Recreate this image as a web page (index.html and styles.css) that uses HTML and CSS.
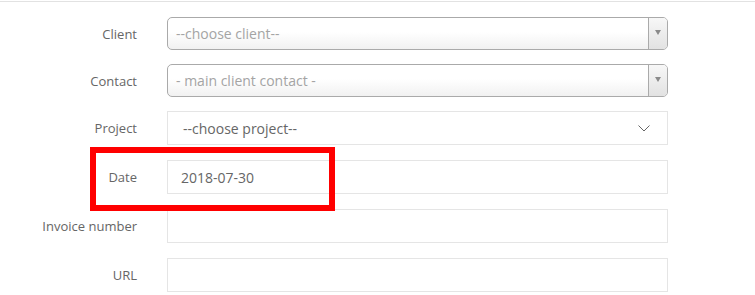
FILE: index.html
```html
<html>
    <head>
        <title>Invoice</title>
        <link rel="stylesheet" href="styles.css">
    </head>
    <body>
        <div class="topline"></div>
        <form class="form">
            <div class="row row-chosen">
                <label>Client</label>
                <div class="chosen">
                    <span class="placeholder">--choose client--</span>
                    <div class="chosen-arrow"><b></b></div>
                </div>
            </div>
            <div class="row row-chosen">
                <label>Contact</label>
                <div class="chosen">
                    <span class="placeholder">- main client contact -</span>
                    <div class="chosen-arrow"><b></b></div>
                </div>
            </div>
            <div class="row">
                <label>Project</label>
                <div class="field select">
                    <span>--choose project--</span>
                    <svg width="12" height="7" viewBox="0 0 12 7"><polyline points="0.5,0.5 6,6 11.5,0.5" fill="none" stroke="#666" stroke-width="1"/></svg>
                </div>
            </div>
            <div class="row">
                <label>Date</label>
                <div class="field date">2018-07-30</div>
            </div>
            <div class="row">
                <label>Invoice number</label>
                <div class="field"></div>
            </div>
            <div class="row">
                <label>URL</label>
                <div class="field"></div>
            </div>
            <div class="highlight"></div>
        </form>
    </body>
</html>
```

FILE: styles.css
```css
body{
	margin:0;
	font-family:'Open Sans', sans-serif;
	background:#fff;
	}
.topline{
	margin-top:1px;
	height:1px;
	background:#e2e2e2;
	}
.form{
	position:relative;
	margin:0;
	padding-top:15px;
	}
.row{
	display:flex;
	align-items:center;
	margin-bottom:15px;
	}
.row-chosen{
	margin-bottom:14px;
	}
.row label{
	width:137px;
	margin-right:30px;
	text-align:right;
	font-size:13px;
	color:#666;
	}
.chosen{
	box-sizing:border-box;
	width:501px;
	height:33px;
	display:flex;
	align-items:center;
	border:1px solid #aaa;
	border-radius:5px;
	background:linear-gradient(#fff 0%, #fff 45%, #f1f1f1 100%);
	overflow:hidden;
	}
.placeholder{
	flex:1;
	padding-left:8px;
	font-size:14px;
	color:#a4a4a4;
	}
.chosen-arrow{
	width:18px;
	height:100%;
	border-left:1px solid #aaa;
	background:linear-gradient(#f7f7f7, #e2e2e2);
	display:flex;
	align-items:center;
	justify-content:center;
	}
.chosen-arrow b{
	width:0;
	height:0;
	border-left:3px solid transparent;
	border-right:3px solid transparent;
	border-top:5px solid #8a8a8a;
	margin-top:-3px;
	}
.field{
	box-sizing:border-box;
	width:501px;
	height:34px;
	border:1px solid #e5e5e5;
	background:#fff;
	font-size:14px;
	color:#666;
	display:flex;
	align-items:center;
	}
.select{
	padding:0 17px 0 15px;
	justify-content:space-between;
	}
.date{
	padding-left:13px;
	}
.highlight{
	position:absolute;
	left:90px;
	top:145px;
	width:245px;
	height:64px;
	box-sizing:border-box;
	border:6px solid #f00;
	}
```
